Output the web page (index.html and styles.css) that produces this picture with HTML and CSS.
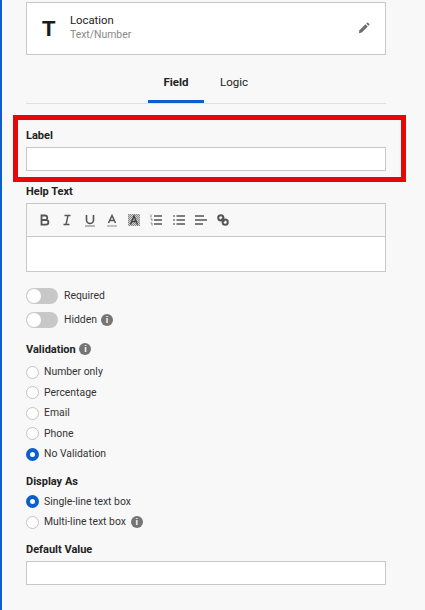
FILE: index.html
```html
<!DOCTYPE html>
<html>
<head>
    <meta charset="utf-8">
    <meta name="viewport" content="initial-scale=1, width=device-width">
    <title>Field settings</title>
    <link rel="stylesheet" href="styles.css">
</head>
<body>
    <div class="panel">
        <div class="field-card">
            <span class="field-type">T</span>
            <div class="field-names">
                <div class="field-name">Location</div>
                <div class="field-kind">Text/Number</div>
            </div>
            <svg class="edit-icon" width="12" height="12" viewBox="0 0 14 14">
                <path d="M1 13l.7-3.4 7-7 2.7 2.7-7 7z" fill="#6e6e6e"/>
                <path d="M9.6 1.8l1-1a.8.8 0 0 1 1.1 0l1.5 1.5a.8.8 0 0 1 0 1.1l-1 1z" fill="#6e6e6e"/>
            </svg>
        </div>

        <div class="tabs">
            <div class="tab tab-active">Field</div>
            <div class="tab">Logic</div>
        </div>

        <div class="label-highlight">
            <div class="heading">Label</div>
            <div class="text-input"></div>
        </div>

        <div class="heading help-heading">Help Text</div>
        <div class="editor">
            <div class="toolbar">
                <svg class="tool" width="12" height="12" viewBox="0 0 12 12"><path d="M2.5 1.5h4a2.3 2.3 0 0 1 0 4.5h-4zM2.5 6h4.6a2.3 2.3 0 0 1 0 4.6H2.5z" fill="none" stroke="#555" stroke-width="1.8"/></svg>
                <svg class="tool" width="12" height="12" viewBox="0 0 12 12"><path d="M3.5 1.5h6M2.5 10.5h6M7 1.5L5 10.5" fill="none" stroke="#555" stroke-width="1.4"/></svg>
                <svg class="tool" width="12" height="13" viewBox="0 0 12 13"><path d="M2.5 1v5a3.5 3.5 0 0 0 7 0V1" fill="none" stroke="#555" stroke-width="1.6"/><path d="M1 12h10" stroke="#999" stroke-width="1.4"/></svg>
                <svg class="tool" width="12" height="13" viewBox="0 0 12 13"><path d="M2.5 9L6 1.5 9.5 9M4 6.5h4" fill="none" stroke="#555" stroke-width="1.5"/><path d="M1 12h10" stroke="#aaa" stroke-width="1.4"/></svg>
                <svg class="tool" width="12" height="12" viewBox="0 0 12 12">
                    <defs>
                        <pattern id="checks" width="2" height="2" patternUnits="userSpaceOnUse">
                            <rect width="2" height="2" fill="#d0d0d0"/>
                            <rect width="1" height="1" fill="#8a8a8a"/>
                            <rect x="1" y="1" width="1" height="1" fill="#8a8a8a"/>
                        </pattern>
                    </defs>
                    <rect width="12" height="12" fill="url(#checks)"/>
                    <path d="M2.5 10.5L6 2l3.5 8.500M4 7.5h4" fill="none" stroke="#444" stroke-width="1.4"/>
                </svg>
                <svg class="tool" width="12" height="12" viewBox="0 0 12 12"><path d="M4 2h8M4 6h8M4 10h8" stroke="#555" stroke-width="1.5"/><path d="M1 .5v3M.5 5h1.5v2M.5 9h1.5v2.5" fill="none" stroke="#888" stroke-width="1"/></svg>
                <svg class="tool" width="12" height="12" viewBox="0 0 12 12"><path d="M3.5 2H12M3.5 6H12M3.5 10H12" stroke="#555" stroke-width="1.5"/><path d="M0 2h2M0 6h2M0 10h2" stroke="#777" stroke-width="1.5"/></svg>
                <svg class="tool" width="12" height="12" viewBox="0 0 12 12"><path d="M0 2h9M0 6h12M0 10h8" stroke="#555" stroke-width="1.5"/></svg>
                <svg class="tool" width="12" height="12" viewBox="0 0 12 12"><g fill="none" stroke="#555" stroke-width="2"><circle cx="3.8" cy="3.8" r="2.6"/><circle cx="8.2" cy="8.2" r="2.6"/><path d="M4.5 4.5l3 3"/></g></svg>
            </div>
            <div class="editor-body"></div>
        </div>

        <div class="toggle-row">
            <span class="toggle"></span>
            <span class="option-text">Required</span>
        </div>
        <div class="toggle-row">
            <span class="toggle"></span>
            <span class="option-text">Hidden</span>
            <span class="info">i</span>
        </div>

        <div class="heading validation-heading">Validation <span class="info">i</span></div>
        <div class="radio-list validation-list">
            <div class="radio-row"><span class="radio"></span><span class="option-text">Number only</span></div>
            <div class="radio-row"><span class="radio"></span><span class="option-text">Percentage</span></div>
            <div class="radio-row"><span class="radio"></span><span class="option-text">Email</span></div>
            <div class="radio-row"><span class="radio"></span><span class="option-text">Phone</span></div>
            <div class="radio-row"><span class="radio radio-on"></span><span class="option-text">No Validation</span></div>
        </div>

        <div class="heading display-heading">Display As</div>
        <div class="radio-list">
            <div class="radio-row"><span class="radio radio-on"></span><span class="option-text">Single-line text box</span></div>
            <div class="radio-row"><span class="radio"></span><span class="option-text">Multi-line text box</span><span class="info">i</span></div>
        </div>

        <div class="heading default-heading">Default Value</div>
        <div class="text-input"></div>
    </div>
</body>
</html>
```

FILE: styles.css
```css
html, body {
    height: 100%;
}
body {
    margin: 0;
    font-family: Roboto, sans-serif;
    font-size: 11px;
    color: #222;
    background-color: #f8f8f8;
    overflow: hidden;
}
.panel {
    box-sizing: border-box;
    width: 425px;
    height: 610px;
    padding: 2px 39px 0 24px;
    border-left: 2px solid #0a5fcc;
}
.field-card {
    display: flex;
    align-items: center;
    height: 53px;
    box-sizing: border-box;
    padding: 0 15px;
    background-color: #fff;
    border: 1px solid #c8c8c8;
}
.field-type {
    width: 28px;
    font-family: "Liberation Sans", sans-serif;
    font-size: 22px;
    font-weight: 700;
    color: #1a1a1a;
}
.field-names {
    flex: 1;
    margin-top: -2px;
}
.field-name {
    font-size: 11.3px;
    line-height: 15px;
    color: #222;
}
.field-kind {
    font-size: 10.4px;
    line-height: 14px;
    color: #888;
}
.edit-icon {
    margin-top: -1px;
}
.tabs {
    display: flex;
    justify-content: center;
    gap: 2px;
    height: 48px;
    border-bottom: 1px solid #e0e0e0;
    padding-right: 2px;
}
.tab {
    box-sizing: border-box;
    width: 56px;
    height: 48px;
    padding-top: 20px;
    font-size: 11.5px;
    line-height: 14px;
    text-align: center;
}
.tab-active {
    font-weight: 700;
    border-bottom: 3px solid #0a5fcc;
}
.heading {
    font-size: 11px;
    font-weight: 700;
    line-height: 13px;
    color: #222;
}
.label-highlight {
    margin: 11px -20px 0 -13px;
    padding: 9px 15px 6px 8px;
    border: 5px solid #e60808;
}
.label-highlight .heading {
    margin-bottom: 5px;
}
.text-input {
    box-sizing: border-box;
    height: 24px;
    background-color: #fff;
    border: 1px solid #c8c8c8;
}
.help-heading {
    margin-top: 3px;
}
.editor {
    margin-top: 5px;
    border: 1px solid #c8c8c8;
}
.toolbar {
    display: flex;
    align-items: center;
    height: 32px;
    padding-left: 12px;
    gap: 10.3px;
    border-bottom: 1px solid #c8c8c8;
}
.editor-body {
    height: 34px;
    background-color: #fff;
}
.toggle-row {
    display: flex;
    align-items: center;
    height: 16px;
    margin-top: 8px;
}
.editor + .toggle-row {
    margin-top: 16px;
}
.toggle {
    position: relative;
    width: 32px;
    height: 16px;
    margin-right: 6px;
    border-radius: 8px;
    background-color: #c8c8c8;
}
.toggle::before {
    content: "";
    position: absolute;
    left: 1px;
    top: 1px;
    width: 14px;
    height: 14px;
    border-radius: 50%;
    background-color: #fff;
}
.option-text {
    font-size: 10.4px;
    line-height: 14px;
    color: #333;
}
.info {
    display: inline-block;
    width: 12px;
    height: 12px;
    margin-left: 5px;
    border-radius: 50%;
    background-color: #757575;
    color: #fff;
    font-family: "Liberation Sans", sans-serif;
    font-size: 9px;
    font-weight: 700;
    line-height: 12px;
    text-align: center;
    vertical-align: 1px;
}
.toggle-row .info {
    margin-left: 4px;
}
.validation-heading {
    margin-top: 15px;
}
.validation-heading .info {
    margin-left: 1px;
}
.radio-list {
    margin-top: 4px;
}
.validation-list {
    margin-top: 6px;
}
.radio-row {
    display: flex;
    align-items: center;
    height: 20.5px;
}
.radio {
    box-sizing: border-box;
    width: 13px;
    height: 13px;
    margin-right: 5px;
    border: 1px solid #c4c4c4;
    border-radius: 50%;
    background-color: #fff;
}
.radio-on {
    border: 4px solid #0a5fcc;
}
.display-heading {
    margin-top: 10px;
}
.default-heading {
    margin-top: 10px;
    margin-bottom: 5px;
}
```
